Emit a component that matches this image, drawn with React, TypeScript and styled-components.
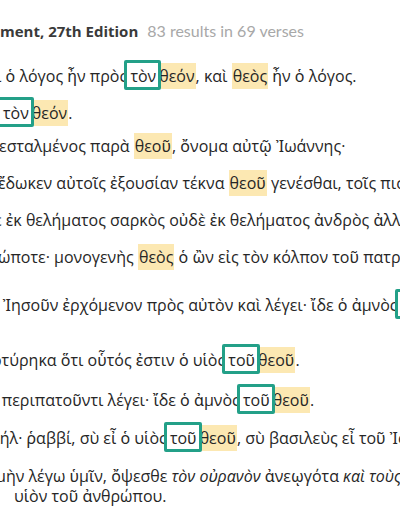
import React from "react";
import styled, { createGlobalStyle } from "styled-components";

type Piece = string | { hit: string } | { mark: string } | { em: string };

interface VerseData {
  top: number;
  indent: number;
  lines: Piece[][];
}

// visible slice of each matching verse; the rest runs off the left/right edge
const verses: VerseData[] = [
  {
    top: 23,
    indent: -4,
    lines: [["ὶ ὁ λόγος ἦν πρὸς ", { hit: "τὸν" }, { mark: "θεόν" }, ", καὶ ", { mark: "θεὸς" }, " ἦν ὁ λόγος."]],
  },
  { top: 17, indent: 4, lines: [[{ hit: "τὸν" }, { mark: "θεόν" }, "."]] },
  { top: 13, indent: -1, lines: [["εσταλμένος παρὰ ", { mark: "θεοῦ" }, ", ὄνομα αὐτῷ Ἰωάννης·"]] },
  {
    top: 17,
    indent: -2,
    lines: [["ἔδωκεν αὐτοῖς ἐξουσίαν τέκνα ", { mark: "θεοῦ" }, " γενέσθαι, τοῖς πιστεύουσιν"]],
  },
  { top: 17, indent: -6, lines: [["ὲ ἐκ θελήματος σαρκὸς οὐδὲ ἐκ θελήματος ἀνδρὸς ἀλλ' ἐκ θεοῦ"]] },
  {
    top: 17,
    indent: -2,
    lines: [["ώποτε· μονογενὴς ", { mark: "θεὸς" }, " ὁ ὢν εἰς τὸν κόλπον τοῦ πατρὸς"]],
  },
  {
    top: 28,
    indent: -10,
    lines: [["ν Ἰησοῦν ἐρχόμενον πρὸς αὐτὸν καὶ λέγει· ἴδε ὁ ἀμνὸς ", { hit: "τοῦ" }, { mark: "θεοῦ" }]],
  },
  {
    top: 35,
    indent: -8,
    lines: [["ρτύρηκα ὅτι οὗτός ἐστιν ὁ υἱὸς ", { hit: "τοῦ" }, { mark: "θεοῦ" }, "."]],
  },
  {
    top: 20,
    indent: -12,
    lines: [["ῦ περιπατοῦντι λέγει· ἴδε ὁ ἀμνὸς ", { hit: "τοῦ" }, { mark: "θεοῦ" }, "."]],
  },
  {
    top: 18,
    indent: -10,
    lines: [["αήλ· ῥαββί, σὺ εἶ ὁ υἱὸς ", { hit: "τοῦ" }, { mark: "θεοῦ" }, ", σὺ βασιλεὺς εἶ τοῦ Ἰσραήλ."]],
  },
  {
    top: 18,
    indent: -4,
    lines: [
      ["μὴν λέγω ὑμῖν, ὄψεσθε ", { em: "τὸν οὐρανὸν" }, " ἀνεῳγότα ", { em: "καὶ τοὺς ἀγγέλους" }],
      ["υἱὸν τοῦ ἀνθρώπου."],
    ],
  },
];

const renderPiece = (p: Piece, i: number) => {
  if (typeof p === "string") return <React.Fragment key={i}>{p}</React.Fragment>;
  if ("hit" in p) return <Hit key={i}>{p.hit}</Hit>;
  if ("mark" in p) return <Mark key={i}>{p.mark}</Mark>;
  return <Em key={i}>{p.em}</Em>;
};

const App: React.FC = () => {
  return (
    <>
      <GlobalStyle />
      <Page>
        <Header>
          <Title>ment, 27th Edition</Title>
          <Meta>83 results in 69 verses</Meta>
        </Header>
        {verses.map((v, i) => (
          <Verse key={i} $top={v.top} $indent={v.indent}>
            {v.lines.map((line, j) => (
              <Line key={j} $indent={j > 0 ? 18 : 0}>
                {line.map(renderPiece)}
              </Line>
            ))}
          </Verse>
        ))}
      </Page>
    </>
  );
};

const GlobalStyle = createGlobalStyle`
  html, body {
    margin: 0;
    padding: 0;
    background: #ffffff;
  }
  body {
    font-family: "Open Sans", "Noto Sans", sans-serif;
    color: #262626;
  }
`;

const Page = styled.div`
  width: 400px;
  height: 516px;
  overflow: hidden;
  background: #fff;
`;

const Header = styled.div`
  display: flex;
  align-items: baseline;
  gap: 9px;
  height: 22px;
  padding-top: 21px;
  white-space: nowrap;
`;

const Title = styled.span`
  font-size: 15px;
  font-weight: 700;
  color: #3a3a3a;
`;

const Meta = styled.span`
  font-family: Lato, "Open Sans", sans-serif;
  font-size: 16px;
  color: #a8a8a8;
`;

const Verse = styled.div<{ $top: number; $indent: number }>`
  margin-top: ${(p) => p.$top}px;
  margin-left: ${(p) => p.$indent}px;
  font-size: 16px;
  line-height: 20px;
  white-space: nowrap;
`;

const Line = styled.div<{ $indent: number }>`
  padding-left: ${(p) => p.$indent}px;
`;

const Hit = styled.span`
  position: relative;
  z-index: 1;
  display: inline-block;
  line-height: 20px;
  padding: 3px 2px 1px 3px;
  margin: -6px -3px -4px -7px;
  border: 3px solid #23a088;
  border-radius: 2px;
  background: #fff;
`;

const Mark = styled.span`
  background: #fce8b2;
  padding: 2px 1px;
`;

const Em = styled.em`
  font-style: italic;
`;

export default App;
